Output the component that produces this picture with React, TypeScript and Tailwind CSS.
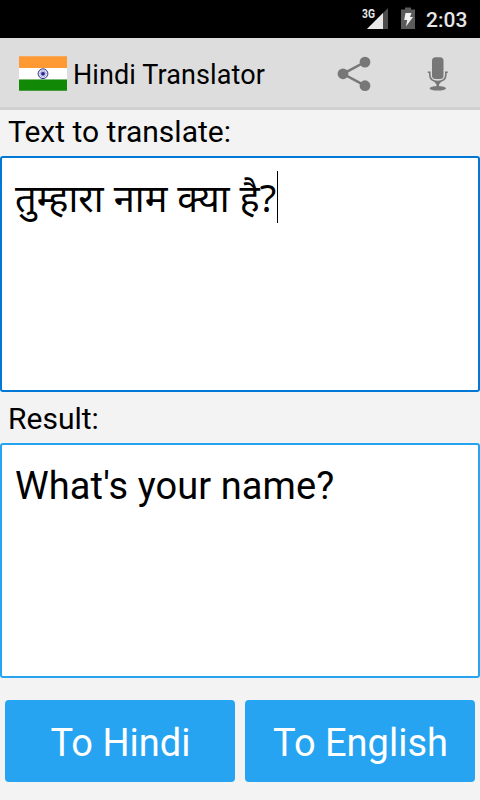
const SPOKES = [0, 30, 60, 90, 120, 150];

function StatusIcons() {
  return (
    <svg width="118" height="38" viewBox="362 0 118 38" className="font-['Roboto',sans-serif]">
      <path d="M388 8V29H367Z" fill="#4d4d4d" />
      <path d="M383 13V29H367Z" fill="#e8e8e8" />
      <g transform="translate(362 17.5) scale(.82 1)">
        <text x="0" y="0" fontSize="12.500" fontWeight="700" fill="#e8e8e8" stroke="#000" strokeWidth="2" paintOrder="stroke">3G</text>
      </g>
      <path d="M405 7.500h6v2h4v19.500h-14V9.500h4z" fill="#5b5b5b" />
      <path d="M405.500 13h6l-1.500 4h3l-7 9.500 1.200-6.500h-3z" fill="#f2f2f2" />
      <text x="426" y="27" fontSize="21" fontWeight="500" fill="#e6e6e6">2:03</text>
    </svg>
  );
}

function Flag() {
  return (
    <svg width="48" height="35" viewBox="0 0 48 35">
      <path d="M0 .2h48V12H0z" fill="#ff9933" />
      <path d="M0 12h48v11.500H0z" fill="#fff" />
      <path d="M0 23.500h48v11.300H0z" fill="#128807" />
      <g fill="none" stroke="#333399">
        <circle cx="24" cy="17.700" r="4.900" strokeWidth="1" />
        {SPOKES.map((a) => (
          <path key={a} d="M19.500 17.700h9" strokeWidth=".45" transform={`rotate(${a} 24 17.7)`} />
        ))}
      </g>
      <circle cx="24" cy="17.700" r="1.800" fill="#28288c" />
    </svg>
  );
}

export default function App() {
  return (
    <div className="w-[480px] h-[800px] bg-[#f3f3f3] flex flex-col overflow-hidden text-black font-['Roboto',sans-serif]">
      <div className="h-[38px] bg-black flex shrink-0 items-center justify-end">
        <StatusIcons />
      </div>
      <div className="h-[72px] shrink-0 bg-[#ddd] border-b-[3px] border-[#d0d0d0] flex items-start pl-[19px] pt-[18px]">
        <Flag />
        <h1 className="ml-[6px] mt-px text-[27px] leading-[36px] tracking-[0.1px] whitespace-nowrap">Hindi Translator</h1>
        <div className="ml-auto mr-[31px] flex items-center gap-[56px]">
          <svg width="34" height="36" viewBox="337 56 34 36" fill="#777">
            <path d="M365 62L343 73.800L365 85.700" fill="none" stroke="#777" strokeWidth="2.500" />
            <circle cx="343" cy="73.800" r="5.400" />
            <circle cx="365" cy="62.100" r="5.400" />
            <circle cx="365" cy="85.700" r="5.400" />
          </svg>
          <svg width="22" height="36" viewBox="427 56 22 36" fill="#777">
            <rect x="432" y="57.300" width="11.500" height="21.700" rx="3.500" />
            <path d="M427.800 72.300h2v2.700q0 6.500 8 6.500t8-6.500v-2.700h2" fill="none" stroke="#777" strokeWidth="1.600" />
            <path d="M434 81.500h7.500l-2.500 3v3h-2.500v-3z" />
            <ellipse cx="437.800" cy="88.300" rx="8.200" ry="2.300" />
          </svg>
        </div>
      </div>
      <label className="h-[46px] shrink-0 pl-[8px] text-[30px] leading-[44px]">Text to translate:</label>
      <div className="h-[236px] shrink-0 border-2 border-[#0078d7] bg-white rounded-[3px] px-[13px] pt-[13px] flex items-start">
        <span className="text-[38px] leading-[52px] tracking-[0.05px] whitespace-nowrap font-['Noto_Sans',sans-serif]">तुम्हारा नाम क्या है?</span>
        <span className="ml-px w-px h-[52px] bg-black" />
      </div>
      <label className="h-[51px] shrink-0 pl-[8px] text-[30px] leading-[54px]">Result:</label>
      <div className="h-[235px] shrink-0 border-2 border-[#26a4f2] bg-white rounded-[3px] px-[13px] pt-[15px] text-[38px] leading-[52px] tracking-[0.1px]">What's your name?</div>
      <div className="flex gap-[10px] px-[5px] mt-[22px]">
        <button className="h-[82px] w-[230px] rounded-[4px] bg-[#26a4f2] text-white text-[38px] pt-[4px] pl-px">To Hindi</button>
        <button className="h-[82px] w-[230px] rounded-[4px] bg-[#26a4f2] text-white text-[38px] pt-[4px] pl-px">To English</button>
      </div>
    </div>
  );
}
